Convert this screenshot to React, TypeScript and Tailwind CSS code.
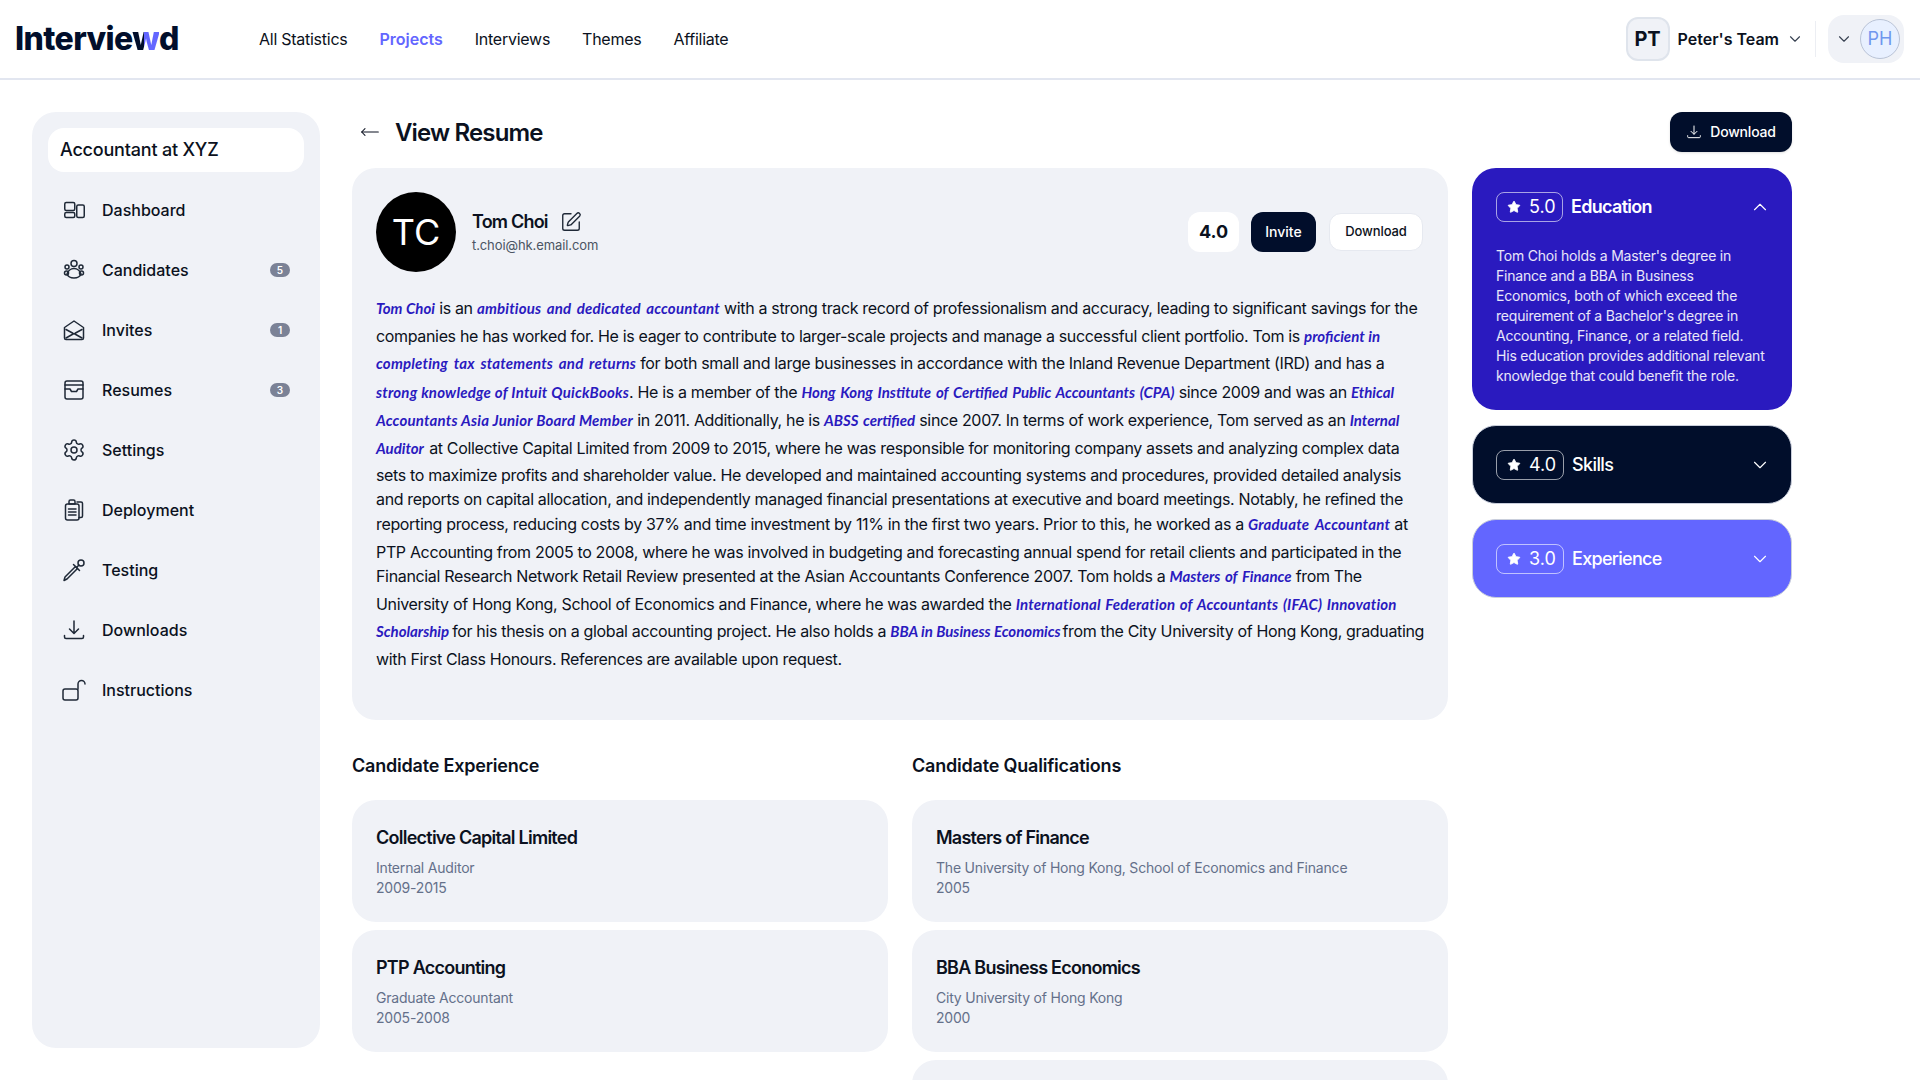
import type { ReactNode } from "react";
import { ChevronDown, ChevronUp, MoveLeft, Settings, SquarePen, Star } from "lucide-react";

const iconProps = {
  width: 24,
  height: 24,
  viewBox: "0 0 24 24",
  fill: "none",
  stroke: "currentColor",
  strokeWidth: 1.5,
  strokeLinecap: "round" as const,
  strokeLinejoin: "round" as const,
};

function DashboardIcon() {
  return (
    <svg {...iconProps}>
      <rect x="2.75" y="4.5" width="10" height="8" rx="1.5" />
      <rect x="2.75" y="14.5" width="10" height="5" rx="1.5" />
      <rect x="14.75" y="7" width="7.5" height="12.5" rx="1.5" />
    </svg>
  );
}

function CandidatesIcon() {
  return (
    <svg {...iconProps}>
      <circle cx="12" cy="5.5" r="3" />
      <circle cx="5" cy="9" r="2" />
      <circle cx="19" cy="9" r="2" />
      <circle cx="4.5" cy="15" r="2" />
      <circle cx="19.5" cy="15" r="2" />
      <path d="M12 10.5c3.6 0 6.2 3 7 5.5-1 2.6-3.6 4-7 4s-6-1.4-7-4c.8-2.5 3.4-5.5 7-5.5z" />
    </svg>
  );
}

function InvitesIcon() {
  return (
    <svg {...iconProps}>
      <path d="M2.5 9.5 12 3l9.5 6.5V20a1.5 1.5 0 0 1-1.5 1.5H4A1.5 1.5 0 0 1 2.5 20z" />
      <path d="m4 11.5 6.5 3.5M20 11.500 13.500 15M4 20l8-4.500 8 4.500" />
    </svg>
  );
}

function ResumesIcon() {
  return (
    <svg {...iconProps}>
      <rect x="3" y="3" width="18" height="18" rx="2" />
      <path d="M3 7h18M3 11h5l1.500 2.500h5L16 11h5" />
    </svg>
  );
}

function DeploymentIcon() {
  return (
    <svg {...iconProps}>
      <path d="M15 4h4a1.500 1.500 0 0 1 1.500 1.500V18a1.500 1.500 0 0 1-1.500 1.500h-2" />
      <rect x="3.500" y="6" width="13.500" height="16" rx="2" />
      <path d="M7 3.500A1.500 1.500 0 0 1 8.500 2h3A1.500 1.500 0 0 1 13 3.500V6H7z" />
      <path d="M6.500 11h7.500M6.500 14h7.500M6.500 17h7.500" />
    </svg>
  );
}

function DropperIcon() {
  return (
    <svg {...iconProps}>
      <path d="M2 22.500l1-3.500L13.500 8.500l2 2L5 21z" />
      <path d="M11.500 6.500l6 6" />
      <path d="M14.500 9.500 17 7" />
      <circle cx="19" cy="5" r="3" />
    </svg>
  );
}

function TrayDownloadIcon({ size = 24 }: { size?: number }) {
  return (
    <svg {...iconProps} width={size} height={size}>
      <path d="M12 3v12M7.500 11l4.500 4.500 4.500-4.500M2.500 17.500V19a1.500 1.500 0 0 0 1.500 1.500h16a1.500 1.500 0 0 0 1.500-1.500v-1.500" />
    </svg>
  );
}

function UnlockIcon() {
  return (
    <svg {...iconProps}>
      <rect x="1" y="11" width="15" height="11" rx="2" />
      <path d="M16 11V6a3.500 3.500 0 0 1 7 0" />
    </svg>
  );
}

const navItems = [
  { label: "Dashboard", icon: <DashboardIcon /> },
  { label: "Candidates", icon: <CandidatesIcon />, badge: "5" },
  { label: "Invites", icon: <InvitesIcon />, badge: "1" },
  { label: "Resumes", icon: <ResumesIcon />, badge: "3" },
  { label: "Settings", icon: <Settings size={24} strokeWidth={1.5} /> },
  { label: "Deployment", icon: <DeploymentIcon /> },
  { label: "Testing", icon: <DropperIcon /> },
  { label: "Downloads", icon: <TrayDownloadIcon /> },
  { label: "Instructions", icon: <UnlockIcon /> },
];

// handwritten highlights: no script font here, so each one is held to the width it has in the design
function Hl({ w, wide, children }: { w: string; wide?: boolean; children: ReactNode }) {
  return (
    <span className={`${w} ${wide ? "tracking-[0.2px]" : "tracking-normal"} inline-block font-['Lato',sans-serif] text-[15px] font-bold whitespace-nowrap text-[#2a1abf] italic [text-align-last:justify]`}>
      {children}
    </span>
  );
}

const resumeLines: { h: string; text: ReactNode }[] = [
  { h: "h-[28px]", text: <><Hl w="w-[59px]">Tom Choi</Hl> is an <Hl w="w-[243px]" wide>ambitious and dedicated accountant</Hl> with a strong track record of professionalism and accuracy, leading to significant savings for the</> },
  { h: "h-[27px]", text: <>companies he has worked for. He is eager to contribute to larger-scale projects and manage a successful client portfolio. Tom is <Hl w="w-[76px]">proficient in</Hl></> },
  { h: "h-[29px]", text: <><Hl w="w-[260px]" wide>completing tax statements and returns</Hl> for both small and large businesses in accordance with the Inland Revenue Department (IRD) and has a</> },
  { h: "h-[28px]", text: <><Hl w="w-[253px]" wide>strong knowledge of Intuit QuickBooks</Hl>. He is a member of the <Hl w="w-[373px]">Hong Kong Institute of Certified Public Accountants (CPA)</Hl> since 2009 and was an <Hl w="w-[45px]">Ethical</Hl></> },
  { h: "h-[28px]", text: <><Hl w="w-[257px]" wide>Accountants Asia Junior Board Member</Hl> in 2011. Additionally, he is <Hl w="w-[91px]">ABSS certified</Hl> since 2007. In terms of work experience, Tom served as an <Hl w="w-[51px]">Internal</Hl></> },
  { h: "h-[27px]", text: <><Hl w="w-[49px]">Auditor</Hl> at Collective Capital Limited from 2009 to 2015, where he was responsible for monitoring company assets and analyzing complex data</> },
  { h: "h-[24px]", text: <>sets to maximize profits and shareholder value. He developed and maintained accounting systems and procedures, provided detailed analysis</> },
  { h: "h-[25px]", text: <>and reports on capital allocation, and independently managed financial presentations at executive and board meetings. Notably, he refined the</> },
  { h: "h-[28px]", text: <>reporting process, reducing costs by 37% and time investment by 11% in the first two years. Prior to this, he worked as a <Hl w="w-[142px]" wide>Graduate Accountant</Hl> at</> },
  { h: "h-[24px]", text: <>PTP Accounting from 2005 to 2008, where he was involved in budgeting and forecasting annual spend for retail clients and participated in the</> },
  { h: "h-[28px]", text: <>Financial Research Network Retail Review presented at the Asian Accountants Conference 2007. Tom holds a <Hl w="w-[122px]">Masters of Finance</Hl> from The</> },
  { h: "h-[27px]", text: <>University of Hong Kong, School of Economics and Finance, where he was awarded the <Hl w="w-[381px]" wide>International Federation of Accountants (IFAC) Innovation</Hl></> },
  { h: "h-[28px]", text: <><Hl w="w-[72px]">Scholarship</Hl> for his thesis on a global accounting project. He also holds a <Hl w="w-[168px]">BBA in Business Economics</Hl> from the City University of Hong Kong, graduating</> },
  { h: "h-[28px]", text: <>with First Class Honours. References are available upon request.</> },
];

const experience = [
  { title: "Collective Capital Limited", sub: "Internal Auditor", years: "2009-2015" },
  { title: "PTP Accounting", sub: "Graduate Accountant", years: "2005-2008" },
];

const qualifications = [
  { title: "Masters of Finance", sub: "The University of Hong Kong, School of Economics and Finance", years: "2005" },
  { title: "BBA Business Economics", sub: "City University of Hong Kong", years: "2000" },
];

function InfoCard({ title, sub, years }: { title: string; sub: string; years: string }) {
  return (
    <div className="h-[122px] rounded-3xl bg-[#f0f2f7] px-6 pt-6">
      <h3 className="text-lg leading-7 font-semibold tracking-[-0.75px] text-[#0b1120]">{title}</h3>
      <p className="mt-1.5 text-sm leading-5 tracking-[-0.2px] text-[#64708a]">{sub}</p>
      <p className="text-sm leading-5 tracking-[-0.2px] text-[#64708a]">{years}</p>
    </div>
  );
}

function ScorePill({ score, wide }: { score: string; wide?: boolean }) {
  return (
    <span className={`flex h-[30px] items-center gap-2 rounded-lg border border-white/60 pl-2.5 ${wide ? "w-[68px]" : "w-[67px]"}`}>
      <Star size={14} fill="currentColor" strokeWidth={1.5} />
      <span className="text-lg leading-none">{score}</span>
    </span>
  );
}

export default function App() {
  return (
    <div className="h-screen overflow-hidden bg-white font-['Inter',sans-serif] text-[#0b1120]">
      <header className="flex h-[80px] items-center border-b-2 border-[#e2e6f0] pr-4 pl-[15px]">
        <div className="relative w-[244px] text-[32px] leading-none font-extrabold tracking-[-0.6px] text-[#010e2b]">
          Intervie
          <span className="bg-linear-to-r from-[#010e2b] from-45% to-[#6366ff] to-45% bg-clip-text text-transparent">w</span>
          d
        </div>
        <nav className="flex items-center gap-8 text-base tracking-[-0.26px]">
          <a>All Statistics</a>
          <a className="font-semibold tracking-normal text-[#6366ff]">Projects</a>
          <a>Interviews</a>
          <a>Themes</a>
          <a>Affiliate</a>
        </nav>
        <div className="ml-auto flex items-center">
          <span className="flex h-11 w-11 items-center justify-center rounded-xl border-2 border-[#dfe4ec] bg-[#f0f2f7] text-xl font-bold">PT</span>
          <span className="ml-2 text-base font-semibold">Peter's Team</span>
          <ChevronDown size={18} strokeWidth={1.5} className="-mr-px ml-[7px] text-[#374151]" />
          <span className="mx-3 h-9 w-px bg-[#eceef3]" />
          <div className="flex h-12 w-[76px] items-center justify-end rounded-2xl bg-[#f0f2f7] pr-1">
            <ChevronDown size={18} strokeWidth={1.5} className="mr-[7px] text-[#374151]" />
            <span className="flex h-10 w-10 items-center justify-center rounded-full border border-[#b9c3d6] bg-[#e8f0ff] text-lg text-[#7097ee]">PH</span>
          </div>
        </div>
      </header>

      <div className="flex pt-8 pl-8">
        <aside className="h-[936px] w-[288px] shrink-0 rounded-3xl bg-[#f0f2f7] px-4 pt-4">
          <div className="flex h-11 items-center rounded-2xl bg-white px-3 text-lg font-medium tracking-[-0.2px]">Accountant at XYZ</div>
          <ul className="mt-2">
            {navItems.map((item) => (
              <li key={item.label} className="flex h-[60px] items-center pr-3.5 pl-3.5">
                <span className="text-[#1f2937]">{item.icon}</span>
                <span className="ml-4 text-base font-medium">{item.label}</span>
                {item.badge && (
                  <span className="ml-auto flex h-[14px] w-5 items-center justify-center rounded-full bg-[#7b8296] text-[10px] font-semibold text-white">
                    {item.badge}
                  </span>
                )}
              </li>
            ))}
          </ul>
        </aside>

        <main className="ml-8 w-[1096px] shrink-0">
          <div className="flex h-10 items-center pl-2">
            <MoveLeft size={20} strokeWidth={1.25} />
            <h1 className="mt-0.5 ml-[15px] text-2xl font-semibold tracking-[-0.85px]">View Resume</h1>
          </div>

          <section className="mt-4 h-[552px] rounded-3xl bg-[#f0f2f7] px-6 pt-6">
            <div className="flex items-center">
              <span className="flex h-20 w-20 items-center justify-center rounded-full bg-black text-4xl text-white">TC</span>
              <div className="ml-4">
                <div className="flex items-center">
                  <span className="text-lg font-semibold tracking-[-0.8px]">Tom Choi</span>
                  <SquarePen size={22} strokeWidth={1.5} className="ml-3 text-[#1f2937]" />
                </div>
                <p className="text-[13px] tracking-[-0.1px] text-[#4b5563]">t.choi@hk.email.com</p>
              </div>
              <div className="ml-auto flex items-center pr-px">
                <span className="flex h-10 w-[51px] items-center justify-center rounded-xl bg-white text-lg font-bold">4.0</span>
                <button className="ml-3 h-10 w-[65px] rounded-xl bg-[#010e2b] text-sm font-medium text-white">Invite</button>
                <button className="ml-[13px] h-[38px] w-[94px] rounded-xl border border-[#e6e9f0] bg-white text-[13px] font-medium tracking-[-0.1px]">Download</button>
              </div>
            </div>
            <div className="mt-[22px] text-base tracking-[-0.34px]">
              {resumeLines.map((line, i) => (
                <p key={i} className={`${line.h} leading-[28px] whitespace-nowrap`}>{line.text}</p>
              ))}
            </div>
          </section>

          <div className="mt-[34px] grid grid-cols-2 gap-x-6">
            <div>
              <h2 className="text-lg leading-6 font-semibold tracking-[-0.2px]">Candidate Experience</h2>
              <div className="mt-[22px] flex flex-col gap-2">
                {experience.map((item) => <InfoCard key={item.title} {...item} />)}
              </div>
            </div>
            <div>
              <h2 className="text-lg leading-6 font-semibold tracking-[-0.2px]">Candidate Qualifications</h2>
              <div className="mt-[22px] flex flex-col gap-2">
                {qualifications.map((item) => <InfoCard key={item.title} {...item} />)}
                <div className="h-[122px] rounded-3xl bg-[#f0f2f7]" />
              </div>
            </div>
          </div>
        </main>

        <aside className="ml-6 w-[320px] shrink-0">
          <div className="flex justify-end">
            <button className="flex h-10 w-[122px] items-center justify-center gap-2 rounded-xl bg-[#010e2b] text-sm font-medium tracking-[-0.2px] text-white shadow-sm">
              <TrayDownloadIcon size={16} />
              Download
            </button>
          </div>
          <div className="mt-4 flex flex-col gap-[15px]">
            <div className="h-[242px] rounded-3xl bg-[#2a1abf] px-6 pt-6 text-white">
              <div className="flex items-center">
                <ScorePill score="5.0" />
                <span className="ml-2 text-lg font-semibold tracking-[-0.7px]">Education</span>
                <ChevronUp size={22} strokeWidth={1.25} className="-mr-[3px] ml-auto" />
              </div>
              <p className="mt-6 w-[270px] text-sm leading-5 tracking-[-0.2px] text-white/90">
                Tom Choi holds a Master's degree in Finance and a BBA in Business Economics, both of which exceed the requirement of a Bachelor's degree in Accounting, Finance, or a related field. His education provides additional relevant knowledge that could benefit the role.
              </p>
            </div>
            <div className="flex h-[79px] items-center rounded-3xl border border-[#c9cedb] bg-[#010e2b] px-[23px] text-white">
              <ScorePill score="4.0" wide />
              <span className="ml-2 text-lg font-medium tracking-[-0.6px]">Skills</span>
              <ChevronDown size={22} strokeWidth={1.25} className="-mr-[3px] ml-auto" />
            </div>
            <div className="flex h-[79px] items-center rounded-3xl border border-[#c9cedb] bg-[#6366ff] px-[23px] text-white">
              <ScorePill score="3.0" wide />
              <span className="ml-2 text-lg font-medium tracking-[-0.7px]">Experience</span>
              <ChevronDown size={22} strokeWidth={1.25} className="-mr-[3px] ml-auto" />
            </div>
          </div>
        </aside>
      </div>
    </div>
  );
}
